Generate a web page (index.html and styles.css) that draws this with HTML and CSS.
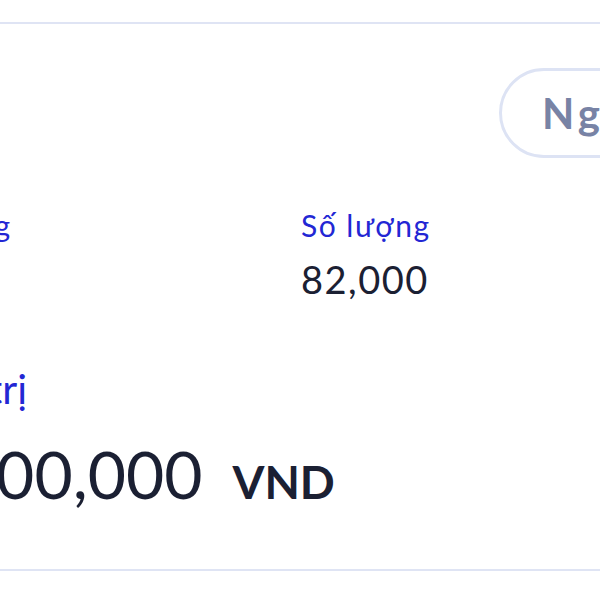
FILE: index.html
```html
<!DOCTYPE html>
<html lang="vi">
<head>
    <meta charset="UTF-8">
    <meta name="viewport" content="width=device-width, initial-scale=1.0">
    <title>Chi tiết giao dịch</title>
    <link rel="stylesheet" href="styles.css">
</head>
<body>
    <div class="card">
        <div class="card-header">
            <div class="date-pill">Ngày 15/03/2024</div>
        </div>
        <div class="stats">
            <div class="stat">
                <div class="label">Giá đặt hàng</div>
                <div class="value">12,000</div>
            </div>
            <div class="stat">
                <div class="label">Số lượng</div>
                <div class="value">82,000</div>
            </div>
        </div>
        <div class="total">
            <div class="total-label">Tổng giá trị</div>
            <div class="total-amount">
                <span class="amount">984,000,000</span>
                <span class="currency">VND</span>
            </div>
        </div>
    </div>
</body>
</html>
```

FILE: styles.css
```css
body {
    margin: 0;
    padding: 0;
    background-color: #ffffff;
    font-family: Lato, "Noto Sans", sans-serif;
    overflow: hidden;
}
.card {
    margin-top: 22px;
    margin-left: -200px;
    width: 991px;
    padding: 0 28px 57px;
    border-top: 2px solid #dfe4f4;
    border-bottom: 2px solid #dfe4f4;
    background-color: #ffffff;
}
.card-header {
    display: flex;
    justify-content: flex-end;
    padding-top: 44px;
}
.date-pill {
    box-sizing: border-box;
    width: 320px;
    height: 90px;
    line-height: 84px;
    padding-left: 40px;
    border: 3px solid #dde3f4;
    border-radius: 45px;
    color: #7883a5;
    font-size: 42px;
    font-weight: 700;
    letter-spacing: 4px;
    white-space: nowrap;
    overflow: hidden;
}
.stats {
    display: grid;
    grid-template-columns: 473px 1fr;
    margin-top: 50px;
}
.label {
    color: #2327d4;
    font-size: 30px;
    line-height: 34px;
    letter-spacing: 1.5px;
}
.value {
    margin-top: 16px;
    color: #1b2033;
    font-size: 38px;
    line-height: 42px;
    letter-spacing: 1.5px;
}
.total {
    margin-top: 65px;
}
.total-label {
    color: #2327d4;
    font-size: 41px;
    line-height: 48px;
}
.total-amount {
    display: flex;
    align-items: baseline;
    gap: 30px;
    margin-top: 23px;
    color: #1b2033;
}
.amount {
    font-size: 66px;
    line-height: 76px;
}
.currency {
    font-size: 46px;
    font-weight: 700;
}
```
